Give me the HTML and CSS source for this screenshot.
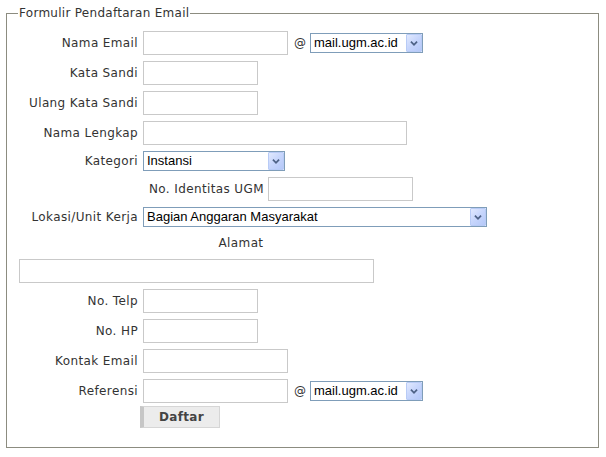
FILE: index.html
```html
<!DOCTYPE html>
<html>
<head>
<meta charset="utf-8">
<title>Formulir Pendaftaran Email</title>
<link rel="stylesheet" href="styles.css">
</head>
<body>
<fieldset class="reg">
  <legend class="reg-legend">Formulir Pendaftaran Email</legend>
  <div class="grid">
    <label class="lbl">Nama Email</label>
    <div class="ctl">
      <input class="txt w145" type="text">
      <span class="at">@</span>
      <span class="sel w113"><select><option>mail.ugm.ac.id</option></select><span class="arrow"><svg viewBox="0 0 16 18" width="16" height="100%" preserveAspectRatio="none"><path d="M4.5 7.5 L8 11 L11.5 7.5" fill="none" stroke="#4d6185" stroke-width="2"/></svg></span></span>
    </div>

    <label class="lbl">Kata Sandi</label>
    <div class="ctl"><input class="txt w115" type="password"></div>

    <label class="lbl">Ulang Kata Sandi</label>
    <div class="ctl"><input class="txt w115" type="password"></div>

    <label class="lbl">Nama Lengkap</label>
    <div class="ctl"><input class="txt w264" type="text"></div>

    <label class="lbl">Kategori</label>
    <div class="ctl">
      <span class="sel w142"><select><option>Instansi</option></select><span class="arrow"><svg viewBox="0 0 16 18" width="16" height="100%" preserveAspectRatio="none"><path d="M4.5 7.5 L8 11 L11.5 7.5" fill="none" stroke="#4d6185" stroke-width="2"/></svg></span></span>
    </div>

    <div class="lbl"></div>
    <div class="ctl ident">
      <label class="lbl-inline">No. Identitas UGM</label>
      <input class="txt w145" type="text">
    </div>

    <label class="lbl">Lokasi/Unit Kerja</label>
    <div class="ctl">
      <span class="sel w344"><select><option>Bagian Anggaran Masyarakat</option></select><span class="arrow"><svg viewBox="0 0 16 18" width="16" height="100%" preserveAspectRatio="none"><path d="M4.5 7.5 L8 11 L11.5 7.5" fill="none" stroke="#4d6185" stroke-width="2"/></svg></span></span>
    </div>

    <div class="alamat-lbl">Alamat</div>
    <div class="alamat-in"><input class="txt w355" type="text"></div>

    <label class="lbl">No. Telp</label>
    <div class="ctl"><input class="txt w115" type="text"></div>

    <label class="lbl">No. HP</label>
    <div class="ctl"><input class="txt w115" type="text"></div>

    <label class="lbl">Kontak Email</label>
    <div class="ctl"><input class="txt w145" type="text"></div>

    <label class="lbl">Referensi</label>
    <div class="ctl">
      <input class="txt w145" type="text">
      <span class="at">@</span>
      <span class="sel w113"><select><option>mail.ugm.ac.id</option></select><span class="arrow"><svg viewBox="0 0 16 18" width="16" height="100%" preserveAspectRatio="none"><path d="M4.5 7.5 L8 11 L11.5 7.5" fill="none" stroke="#4d6185" stroke-width="2"/></svg></span></span>
    </div>

    <div class="lbl"></div>
    <div class="ctl btnrow"><button class="btn" type="button">Daftar</button></div>
  </div>
</fieldset>
</body>
</html>
```

FILE: styles.css
```css
html, body {
  margin: 0;
  padding: 0;
  background: #ffffff;
}
body {
  font-family: "DejaVu Sans", Verdana, sans-serif;
  font-size: 12px;
  color: #333333;
  letter-spacing: 0.38px;
}
.reg {
  margin: 6px 7px 0 6px;
  padding: 0 0 19px 12px;
  border: 1px solid #8c8c80;
  min-width: 0;
}
.reg-legend {
  padding: 0 1px;
  margin-left: -1px;
  line-height: 14px;
  color: #333333;
  letter-spacing: 0.28px;
}
.grid {
  display: grid;
  grid-template-columns: 124px auto;
  row-gap: 6px;
  margin-top: 11px;
}
.lbl {
  text-align: right;
  padding-right: 5px;
  display: flex;
  align-items: center;
  justify-content: flex-end;
  white-space: nowrap;
}
.ctl {
  display: flex;
  align-items: center;
}
.ident {
  padding-left: 6px;
  gap: 4px;
}
.lbl-inline {
  white-space: nowrap;
}
.txt {
  box-sizing: border-box;
  height: 24px;
  margin: 0;
  border: 1px solid #c9c9c9;
  background: #fff;
  padding: 0 3px;
  font-family: "Liberation Sans", Arial, sans-serif;
  font-size: 13px;
  letter-spacing: 0;
}
.w115 { width: 115px; }
.w145 { width: 145px; }
.w264 { width: 264px; }
.w355 { width: 355px; }
.at {
  margin: 0 4px 0 6px;
  font-size: 12px;
  letter-spacing: 0;
}
.sel {
  position: relative;
  display: inline-block;
  height: 20px;
  box-sizing: border-box;
}
.w113 { width: 113px; }
.w142 { width: 142px; }
.w344 { width: 344px; }
.sel select {
  -webkit-appearance: none;
  appearance: none;
  box-sizing: border-box;
  width: 100%;
  height: 100%;
  margin: 0;
  border: 1px solid #7f9db9;
  border-radius: 0;
  background: #fff;
  padding: 0 18px 0 3px;
  font-family: "Liberation Sans", Arial, sans-serif;
  font-size: 13px;
  letter-spacing: 0;
  color: #000;
  line-height: 18px;
  outline: none;
}
.arrow {
  position: absolute;
  top: 1px;
  right: 1px;
  bottom: 1px;
  width: 16px;
  box-sizing: border-box;
  border: 1px solid #b8cbf6;
  border-radius: 1px;
  background: linear-gradient(135deg, #e1e9fe 0%, #c6d5fc 50%, #b5c8f8 100%);
  display: flex;
  pointer-events: none;
}
.arrow svg {
  display: block;
  width: 14px;
  height: 100%;
}
.alamat-lbl {
  grid-column: 1 / 3;
  width: 444px;
  height: 20px;
  display: flex;
  align-items: center;
  justify-content: center;
}
.alamat-in {
  grid-column: 1 / 3;
  display: flex;
}
.btnrow {
  margin-top: -3px;
}
.btn {
  margin: 0 0 0 -3px;
  box-sizing: border-box;
  width: 80px;
  height: 22px;
  border: 1px solid #d6d6d6;
  border-left: 4px solid #c6c6c6;
  background: #ececec;
  font-family: "DejaVu Sans", Verdana, sans-serif;
  font-weight: bold;
  font-size: 12px;
  letter-spacing: 0.3px;
  color: #444444;
  padding: 0;
}
```
